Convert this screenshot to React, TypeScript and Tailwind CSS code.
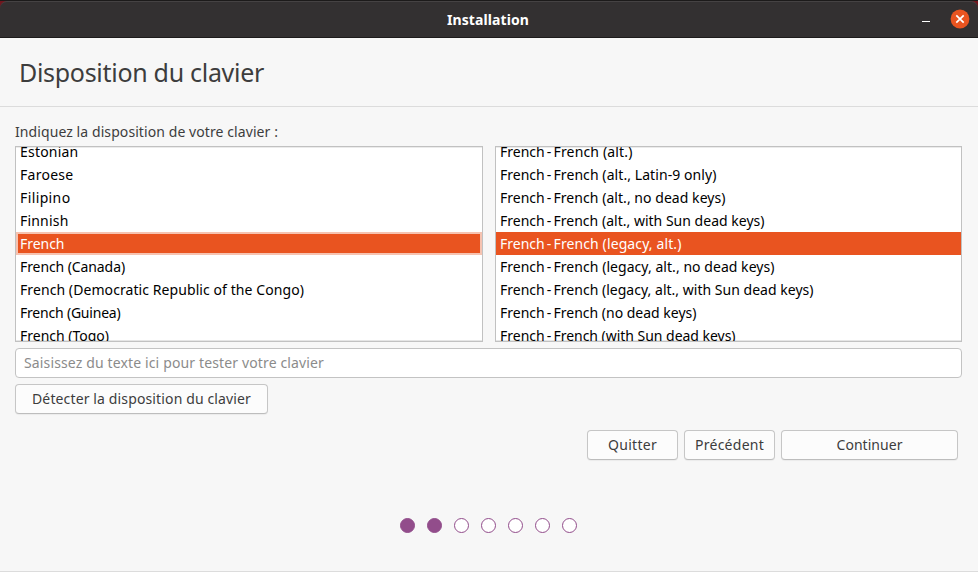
import { useLayoutEffect, useRef, useState } from "react";

type FitProps = { text: string; width: number; className?: string };

/** One line of text whose tracking is adjusted so that it spans a given width. */
function Fit({ text, width, className = "" }: FitProps) {
  const ref = useRef<HTMLSpanElement>(null);
  const [spacing, setSpacing] = useState(0);
  useLayoutEffect(() => {
    const el = ref.current;
    if (!el) return;
    el.style.letterSpacing = "0px";
    const natural = el.getBoundingClientRect().width;
    const next = (width - natural) / text.length;
    el.style.letterSpacing = `${next}px`;
    setSpacing(next);
  }, [text, width]);
  return (
    <span ref={ref} className={`inline-block whitespace-pre ${className}`} style={{ letterSpacing: spacing }}>
      {text}
    </span>
  );
}

type Item = { prefix?: string; label: string; width: number };

const layouts: Item[] = [
  { label: "Estonian", width: 58.5 },
  { label: "Faroese", width: 53.5 },
  { label: "Filipino", width: 50.5 },
  { label: "Finnish", width: 48.5 },
  { label: "French", width: 44.5 },
  { label: "French (Canada)", width: 105 },
  { label: "French (Democratic Republic of the Congo)", width: 284 },
  { label: "French (Guinea)", width: 100.5 },
  { label: "French (Togo)", width: 89 },
];

const variants: Item[] = [
  { prefix: "French - ", label: "French (alt.)", width: 79 },
  { prefix: "French - ", label: "French (alt., Latin-9 only)", width: 163 },
  { prefix: "French - ", label: "French (alt., no dead keys)", width: 172 },
  { prefix: "French - ", label: "French (alt., with Sun dead keys)", width: 211 },
  { prefix: "French - ", label: "French (legacy, alt.)", width: 128 },
  { prefix: "French - ", label: "French (legacy, alt., no dead keys)", width: 221 },
  { prefix: "French - ", label: "French (legacy, alt., with Sun dead keys)", width: 260 },
  { prefix: "French - ", label: "French (no dead keys)", width: 143 },
  { prefix: "French - ", label: "French (with Sun dead keys)", width: 182 },
];

function List({ items, focused, className }: { items: Item[]; focused?: boolean; className: string }) {
  return (
    <div className={`relative h-[196px] overflow-hidden border border-[#c1c1c1] bg-white ${className}`}>
      <div className="-mt-[7px]">
        {items.map((item, i) => (
          <div
            key={item.label}
            className={`h-[23px] pl-1 leading-[23px] ${
              i !== 4
                ? "text-black"
                : focused
                  ? "bg-[#e95420] text-white inset-ring-2 inset-ring-[#f6c3b1]"
                  : "bg-[#e95420] text-white"
            }`}
          >
            {item.prefix && <Fit text={item.prefix} width={53.5} className="[word-spacing:-1.5px]" />}
            <Fit text={item.label} width={item.width} />
          </div>
        ))}
      </div>
      <div className="absolute inset-x-0 top-0 h-px bg-black/8" />
      <div className="absolute inset-x-0 bottom-0 h-px bg-black/10" />
    </div>
  );
}

function Button({ label, width, className }: { label: string; width: number; className: string }) {
  return (
    <button
      className={`flex h-[30px] items-center justify-center rounded border border-[#c6c6c6] border-b-[#bdbdbd] bg-[#fcfcfc] pb-px shadow-[0_1px_1px_rgba(0,0,0,0.05)] ${className}`}
    >
      <Fit text={label} width={width} />
    </button>
  );
}

export default function App() {
  return (
    <div className="flex h-[572px] w-[978px] flex-col overflow-hidden bg-[#f7f7f7] font-['Noto_Sans',sans-serif] text-[14px] text-[#3d3d3d]">
      <header className="h-[38px] border-t border-[#1c1a1a] bg-[#71161e]">
        <div className="flex h-[37px] items-center rounded-t-[7px] border-t border-b border-t-[#454243] border-b-[#1d1b1b] bg-[#333031]">
          <div className="w-[447px]" />
          <Fit text="Installation" width={82} className="text-[14px] leading-5 font-bold text-white" />
          <div className="mt-[3px] ml-auto h-px w-2 bg-white" />
          <svg className="mr-2 mb-[2px] ml-[20px] size-5" viewBox="0 0 20 20">
            <circle cx="10" cy="10" r="9.4" fill="#e95420" />
            <path d="M6.3 6.3l7.4 7.4M13.7 6.3l-7.4 7.4" stroke="#fff" strokeWidth="1.7" />
          </svg>
        </div>
      </header>

      <div className="flex h-[69px] items-center border-b border-[#dcdcdc] pl-[19px]">
        <Fit text="Disposition du clavier" width={245} className="text-[25px] leading-9" />
      </div>

      <main className="flex flex-col px-[15px] pt-[15px]">
        <div className="h-[24px] leading-5">
          <Fit text="Indiquez la disposition de votre clavier :" width={263} />
        </div>
        <div className="flex gap-3">
          <List items={layouts} focused className="w-[468px]" />
          <List items={variants} className="w-[467px]" />
        </div>
        <div className="mt-[6px] flex h-[30px] w-[947px] items-center rounded border border-[#c3c3c3] bg-white pb-px pl-2 text-[#8b8b8b]">
          <Fit text="Saisissez du texte ici pour tester votre clavier" width={300} />
        </div>
        <Button label="Détecter la disposition du clavier" width={219} className="mt-[6px] w-[253px]" />
        <div className="mt-[16px] flex justify-end gap-[6px] pr-[5px]">
          <Button label="Quitter" width={49} className="w-[91px]" />
          <Button label="Précédent" width={69} className="w-[91px]" />
          <Button label="Continuer" width={66} className="w-[177px]" />
        </div>
      </main>

      <div className="mt-[58px] ml-[400px] flex gap-3">
        {[0, 1, 2, 3, 4, 5, 6].map((step) => (
          <div
            key={step}
            className={`size-[15px] rounded-full border border-[#924d8b] ${step < 2 ? "bg-[#924d8b]" : "bg-white"}`}
          />
        ))}
      </div>
      <div className="mt-auto h-px bg-[#dcdcdc]" />
    </div>
  );
}
